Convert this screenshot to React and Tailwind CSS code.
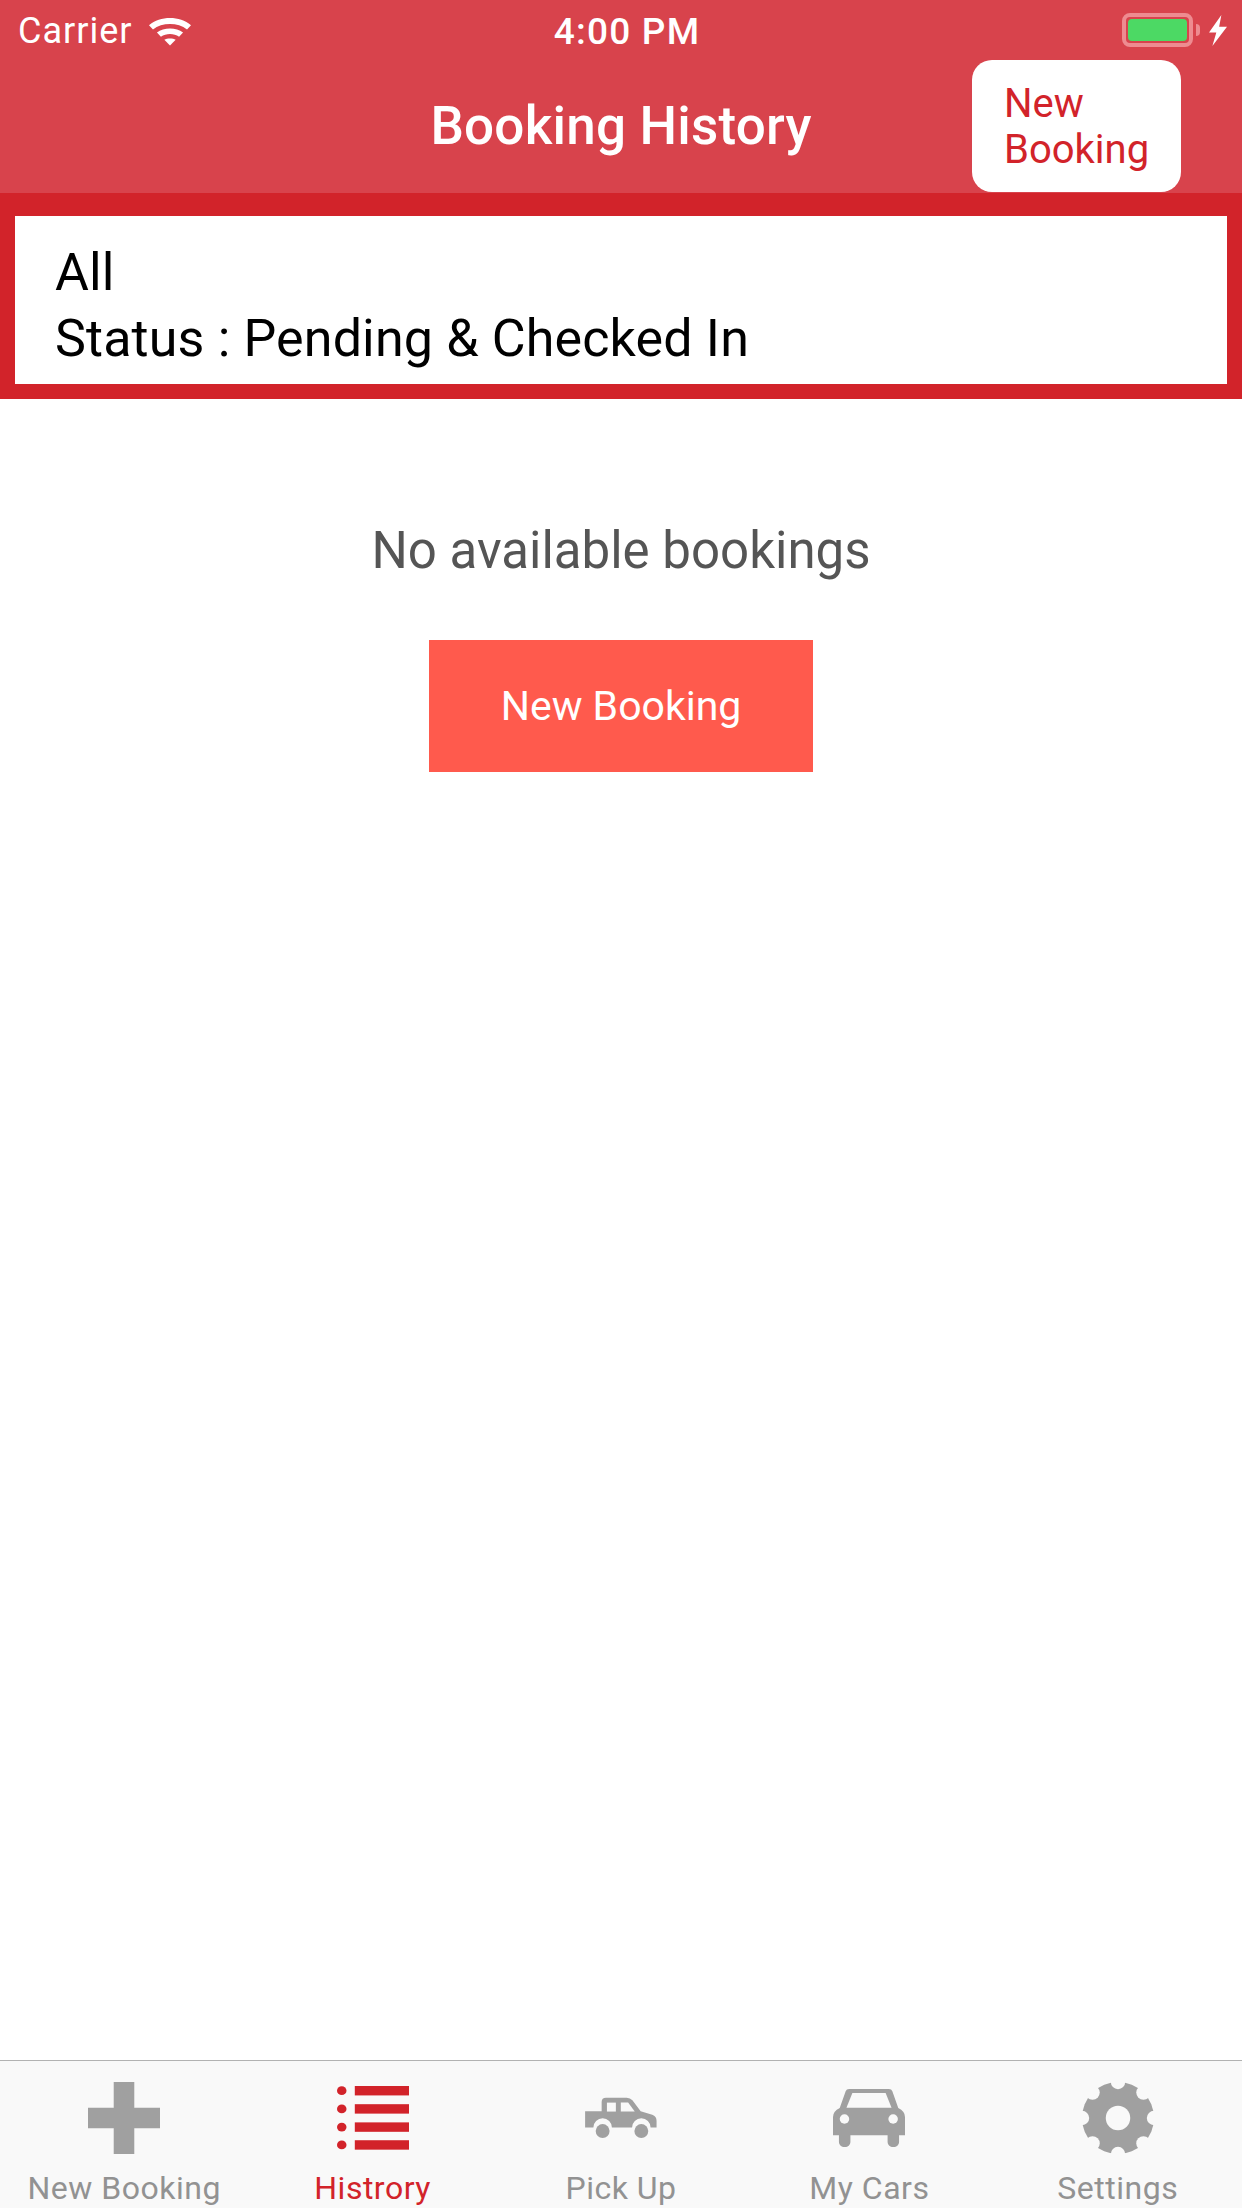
import React from 'react';

const GEAR_NOTCHES = [0, 45, 90, 135, 180, 225, 270, 315];

function WifiIcon() {
  return (
    <svg width="42" height="31" viewBox="0 0 37 32" preserveAspectRatio="none" fill="white">
      <path d="M0 10.5 C10 0.5 27 0.5 37 10.5 L33.5 15 C25.5 7.5 11.5 7.5 3.5 15 Z" />
      <path d="M7 18 C13 12.5 24 12.5 30 18 L26.5 22.5 C22 18.8 15 18.8 10.5 22.5 Z" />
      <path d="M13.5 25.5 C16 23.8 21 23.8 23.5 25.5 L18.5 31.5 Z" />
    </svg>
  );
}

function Battery() {
  return (
    <div className="flex items-center">
      <div className="w-[71px] h-[34px] rounded-[8px] border-[4px] border-[#ee8b90] p-[2px]">
        <div className="w-full h-full rounded-[4px] bg-[#4cd964]" />
      </div>
      <div className="w-[4px] h-[12px] ml-[3px] rounded-r-full bg-[#ee8b90]" />
    </div>
  );
}

function BoltIcon() {
  return (
    <svg width="18" height="31" viewBox="0 0 16 32" preserveAspectRatio="none" fill="white">
      <path d="M11 0 L0 18 H6.5 L3 32 L16 12 H9 Z" />
    </svg>
  );
}

function PlusIcon({ color }) {
  return (
    <svg width="72" height="72" viewBox="222 126 182 216" preserveAspectRatio="none" fill={color}>
      <path d="M287 126 H339 V203 H404 V265 H339 V342 H287 V265 H222 V203 H287 Z" />
    </svg>
  );
}

function ListIcon({ color }) {
  return (
    <svg width="72" height="64" viewBox="848 139 182 190" preserveAspectRatio="none" fill={color}>
      {[153, 207, 261, 314].map(y => (
        <g key={y}>
          <ellipse cx="860" cy={y} rx="12" ry="13" />
          <rect x="893" y={y - 14} width="137" height="28" />
        </g>
      ))}
    </svg>
  );
}

function PickupIcon({ color }) {
  return (
    <svg width="73" height="43" viewBox="40 35 218 130" fill={color}>
      <path d="M42 78 H92 V50 Q92 37 105 37 H168 Q178 37 185 45 L210 78 L245 89 Q258 94 258 107 V127 H240 A28 28 0 0 0 184 127 H123 A28 28 0 0 0 67 127 H42 Z" />
      <rect x="108" y="52" width="27" height="27" fill="#f9f9f9" />
      <path d="M150 52 H172 L192 79 H150 Z" fill="#f9f9f9" />
      <circle cx="95" cy="138" r="21" />
      <circle cx="212" cy="138" r="21" />
    </svg>
  );
}

function CarIcon({ color }) {
  return (
    <svg width="72" height="58" viewBox="533 148 182 174" preserveAspectRatio="none" fill={color}>
      <path d="M574 148 H674 Q681 148 683 155 L698 205 Q715 215 715 232 V287 H700 V308 a14.5 14.5 0 0 1 -29 0 V287 H577 V308 a14.5 14.5 0 0 1 -29 0 V287 H533 V232 Q533 215 550 205 L565 155 Q567 148 574 148 Z" />
      <path d="M582 160 H666 L681 204 H567 Z" fill="#f9f9f9" />
      <ellipse cx="562" cy="238" rx="12" ry="14" fill="#f9f9f9" />
      <ellipse cx="685" cy="238" rx="12" ry="14" fill="#f9f9f9" />
    </svg>
  );
}

function GearIcon({ color }) {
  return (
    <svg width="72" height="72" viewBox="0 0 100 100" fill={color}>
      <circle cx="50" cy="50" r="50" />
      <g fill="#f9f9f9">
        {GEAR_NOTCHES.map(deg => (
          <circle
            key={deg}
            cx={50 + 50 * Math.cos((deg * Math.PI) / 180)}
            cy={50 + 50 * Math.sin((deg * Math.PI) / 180)}
            r="10"
          />
        ))}
        <circle cx="50" cy="50" r="17" />
      </g>
    </svg>
  );
}

const TABS = [
  { label: 'New Booking', Icon: PlusIcon },
  { label: 'Histrory', Icon: ListIcon, active: true },
  { label: 'Pick Up', Icon: PickupIcon },
  { label: 'My Cars', Icon: CarIcon },
  { label: 'Settings', Icon: GearIcon },
];

export default function App() {
  return (
    <div className="h-[2208px] w-[1242px] flex flex-col bg-white font-['Roboto',sans-serif] overflow-hidden">
      {/* Header */}
      <div className="h-[193px] bg-[#d8434c] text-white shrink-0">
        <div className="h-[60px] grid grid-cols-[1fr_auto_1fr] items-center">
          <div className="flex items-center gap-[17px] pl-[18px]">
            <span className="pt-[2px] text-[36px] leading-none tracking-[1px]">Carrier</span>
            <WifiIcon />
          </div>
          <span className="ml-[12px] pt-[2px] text-[37px] leading-none font-medium tracking-[1.2px]">4:00 PM</span>
          <div className="flex items-center justify-end gap-[9px] pr-[15px]">
            <Battery />
            <BoltIcon />
          </div>
        </div>
        <div className="h-[133px] grid grid-cols-[1fr_auto_1fr] items-center">
          <div />
          <h1 className="text-[53px] leading-none font-medium tracking-[0.2px]">Booking History</h1>
          <div className="flex justify-end pr-[61px] h-full">
            <button className="w-[209px] h-[132px] bg-white rounded-[20px] text-left pl-[32px] pt-[2px] text-[#d2232a] text-[40px] leading-[46px]">
              New<br />Booking
            </button>
          </div>
        </div>
      </div>

      {/* Filter */}
      <div className="h-[206px] bg-[#d2232a] pt-[23px] pb-[15px] px-[15px] shrink-0">
        <div className="h-[168px] bg-white pl-[40px] pt-[11px] flex flex-col justify-center text-black text-[52px] leading-[66px] tracking-[0.15px]">
          <span>All</span>
          <span>Status : Pending &amp; Checked In</span>
        </div>
      </div>

      {/* Empty state */}
      <div className="flex-1 flex flex-col items-center pt-[122px]">
        <p className="text-[51px] leading-[60px] text-[#555555]">No available bookings</p>
        <button className="mt-[59px] w-[384px] h-[132px] pt-[2px] bg-[#ff5a4d] text-white text-[41px]">New Booking</button>
      </div>

      {/* Tab bar */}
      <div className="h-[148px] shrink-0 border-t border-[#b2b2b2] bg-[#f9f9f9] grid grid-cols-5">
        {TABS.map(({ label, Icon, active }) => (
          <div key={label} className={`flex flex-col items-center pt-[21px] ${active ? 'text-[#d2232a]' : 'text-[#929292]'}`}>
            <div className="h-[72px] flex items-center justify-center">
              <Icon color={active ? '#d2232a' : '#a0a0a0'} />
            </div>
            <span className="mt-[16px] text-[32px] leading-[36px] tracking-[0.5px] whitespace-nowrap">{label}</span>
          </div>
        ))}
      </div>
    </div>
  );
}
